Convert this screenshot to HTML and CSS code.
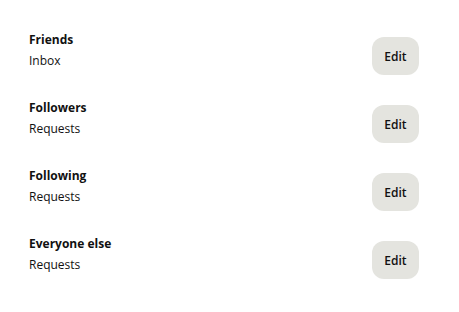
FILE: index.html
```html
<!DOCTYPE html>
<html>
<head>
<meta charset="utf-8">
<link rel="stylesheet" href="styles.css">
</head>
<body>
<div class="list">
  <div class="row">
    <div class="info"><div class="title">Friends</div><div class="sub">Inbox</div></div>
    <button class="edit">Edit</button>
  </div>
  <div class="row">
    <div class="info"><div class="title">Followers</div><div class="sub">Requests</div></div>
    <button class="edit">Edit</button>
  </div>
  <div class="row">
    <div class="info"><div class="title">Following</div><div class="sub">Requests</div></div>
    <button class="edit">Edit</button>
  </div>
  <div class="row">
    <div class="info"><div class="title">Everyone else</div><div class="sub">Requests</div></div>
    <button class="edit">Edit</button>
  </div>
</div>
</body>
</html>
```
FILE: styles.css
```css
html, body { margin: 0; padding: 0; background: #fff; }
body { font-family: "Open Sans", "Noto Sans", sans-serif; color: #111; }
.list { padding: 31px 40px 0 29px; display: flex; flex-direction: column; gap: 23px; }
.row { display: flex; justify-content: space-between; align-items: flex-start; height: 45px; }
.info { display: flex; flex-direction: column; gap: 4px; }
.title { font-size: 12px; font-weight: 700; line-height: 17px; }
.sub { font-size: 12px; line-height: 17px; }
.edit { margin-top: 6px; width: 47px; height: 38px; border: none; border-radius: 12px; background: #e4e4df; font-family: inherit; font-size: 12px; font-weight: 600; color: #111; padding: 0; }
```
